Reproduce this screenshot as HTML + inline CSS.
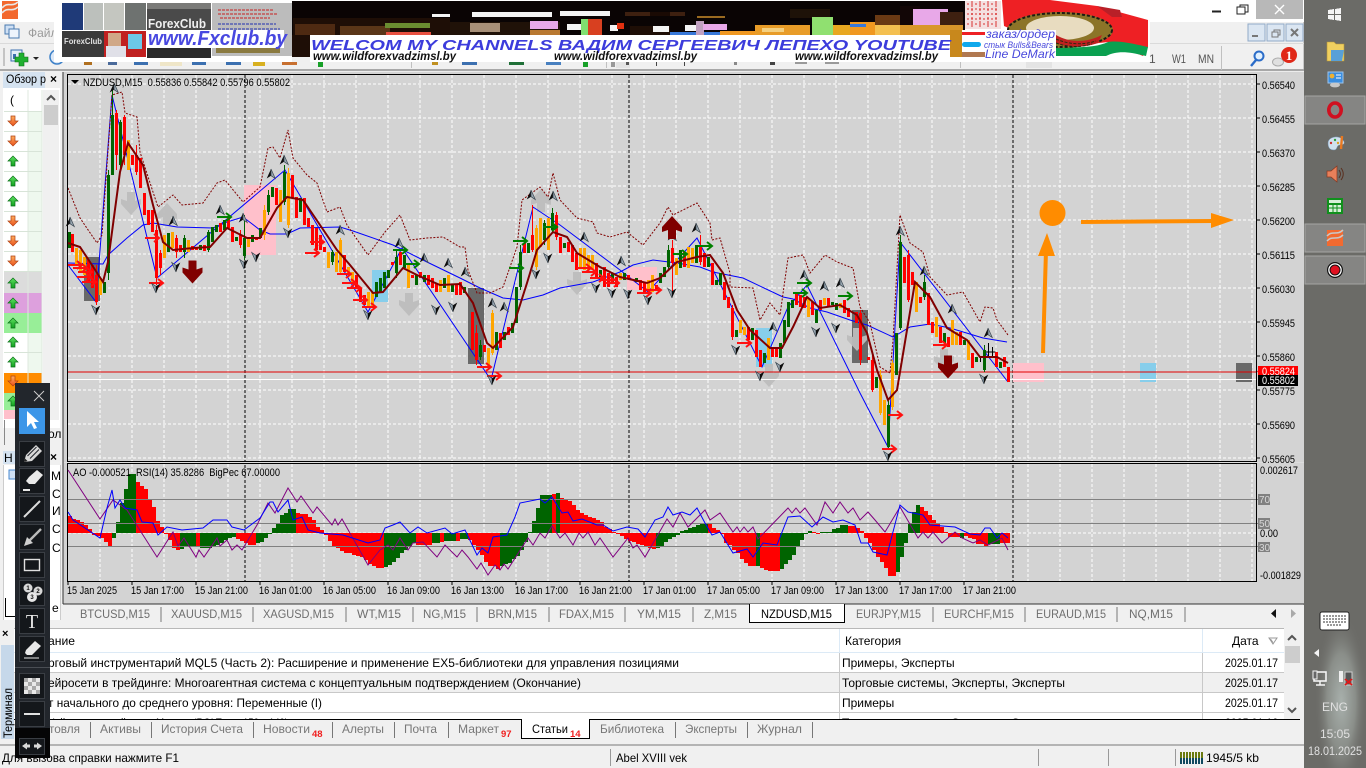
<!DOCTYPE html>
<html lang="ru"><head><meta charset="utf-8"><title>MT5 NZDUSD,M15</title>
<style>
html,body{margin:0;padding:0;width:1366px;height:768px;overflow:hidden;background:#6b6b67}
svg{display:block;font-family:"Liberation Sans","Noto Sans CJK SC",sans-serif}
text{white-space:pre}
.c{shape-rendering:crispEdges}
</style></head><body>
<svg width="1366" height="768" viewBox="0 0 1366 768" xmlns="http://www.w3.org/2000/svg">
<defs>
<radialGradient id="wp1" cx=".6" cy=".68" r=".42"><stop offset="0" stop-color="#a8b0ac"/><stop offset=".55" stop-color="#8a8e89"/><stop offset="1" stop-color="#6f6f6b" stop-opacity="0"/></radialGradient>
<linearGradient id="grD" x1="0" y1="0" x2="0" y2="1"><stop offset="0" stop-color="#ffb060"/><stop offset="1" stop-color="#e8501c"/></linearGradient>
<linearGradient id="grU" x1="0" y1="0" x2="0" y2="1"><stop offset="0" stop-color="#60e060"/><stop offset="1" stop-color="#10a020"/></linearGradient>
<g id="u"><path d="M0-5L-4.300 4.500 0 1.700Z" fill="#0c0c0c"/><path d="M0-5L4.300 4.500 0 1.700Z" fill="#98a6b0" stroke="#3a4650" stroke-width=".7"/></g>
<g id="d"><path d="M0 5L-4.300-4.500 0-1.700Z" fill="#98a6b0" stroke="#3a4650" stroke-width=".7"/><path d="M0 5L4.300-4.500 0-1.700Z" fill="#0c0c0c"/></g>
<path id="ra" d="M0 0H14M9-4L14 0 9 4" fill="none" stroke="#ff1010" stroke-width="2"/>
<path id="ga" d="M0 0H14M9-4L14 0 9 4" fill="none" stroke="#008000" stroke-width="2"/>
<path id="bd" d="M-4-11H4V-2L10-4V1L0 12-10 1V-4L-4-2Z"/>
<path id="bu" d="M-4 11H4V2L10 4V-1L0-12-10-1V4L-4 2Z"/>
<g id="au"><path d="M0-5L5 0H2V5H-2V0H-5Z" fill="url(#grU)" stroke="#0a7018" stroke-width=".7"/></g>
<g id="ad"><path d="M0 5L5 0H2V-5H-2V0H-5Z" fill="url(#grD)" stroke="#b04010" stroke-width=".7"/></g>
</defs>

<!-- wallpaper / taskbar -->
<rect x="1304" width="62" height="768" fill="#6b6b67"/>
<rect x="1304" y="560" width="62" height="208" fill="url(#wp1)"/>
<rect x="1305" y="96" width="60" height="28" fill="#858583" stroke="#a5a5a3"/>
<rect x="1305" y="224" width="60" height="28" fill="#858583" stroke="#a5a5a3"/>
<rect x="1305" y="256" width="60" height="28" fill="#858583" stroke="#a5a5a3"/>
<g class="c" fill="#f4f4f4"><path d="M1328 10l6-1v5h-6zM1335 9l6-1v6h-6zM1328 15h6v5l-6-1zM1335 15h6v6l-6-1z"/></g>
<path d="M1327 42h7l2 2h8v17h-17z" fill="#f0d060" stroke="#b89838" stroke-width=".6"/><path d="M1331 50h13l-2 11h-11z" fill="#58a0d8"/>
<rect x="1328" y="72" width="15" height="11" fill="#3a8ee0" stroke="#9cc4ec"/><circle cx="1332" cy="76" r="2.400" fill="#f0b030"/><path d="M1336 75h5M1336 78h5" stroke="#fff"/><ellipse cx="1335" cy="85" rx="5" ry="2.400" fill="#c8c8c8"/>
<ellipse cx="1335" cy="110" rx="6.200" ry="7" fill="none" stroke="#d01020" stroke-width="3.600"/>
<path d="M1328 143c0-6 10-8 14-4s2 6-2 6-2 5-6 5-6-2-6-7z" fill="#cfe0ee" stroke="#7090b0" stroke-width=".5"/><circle cx="1331" cy="143" r="1.200" fill="#d03030"/><circle cx="1335" cy="140" r="1.200" fill="#30a040"/><circle cx="1338" cy="143" r="1.200" fill="#e0a020"/><path d="M1342 136l-1 13" stroke="#e87820" stroke-width="2.400"/>
<path d="M1327 171h4l6-5v16l-6-5h-4z" fill="#e8805a" stroke="#883820" stroke-width=".7"/><path d="M1339 170c2 3 2 5 0 8M1341 168c3 4 3 8 0 12" fill="none" stroke="#5a3020"/>
<rect x="1327" y="198" width="16" height="16" fill="#10901c"/><rect x="1329" y="200" width="12" height="3" fill="#d8f0d8"/><path d="M1329 205h12v7h-12z" fill="#d8f0d8"/><path d="M1333 205v7M1337 205v7M1329 208h12" stroke="#10901c"/>
<rect x="1327" y="230" width="16" height="16" fill="#f26a30"/><path d="M1327 241c5-6 10 0 16-6M1327 236c5-6 10 0 16-6" fill="none" stroke="#c8c8c8" stroke-width="1.600"/>
<circle cx="1335" cy="270" r="8" fill="#111"/><circle cx="1335" cy="270" r="6.800" fill="#fff"/><circle cx="1335" cy="270" r="5" fill="#e01020"/><circle cx="1335" cy="270" r="5" fill="none" stroke="#111"/>
<rect x="1320" y="612" width="29" height="18" rx="2" fill="#fff" stroke="#222"/><path class="c" d="M1323 616h23M1323 619h23M1323 622h23M1327 625h15" stroke="#333" stroke-dasharray="2 1"/>
<path d="M1319 649v8l-5-4z" fill="#f4f4f4"/>
<rect x="1314" y="672" width="12" height="9" fill="none" stroke="#f4f4f4" stroke-width="1.600"/><path d="M1320 681v4M1316 685h9" stroke="#f4f4f4" stroke-width="1.500"/><rect x="1313" y="671" width="4" height="8" fill="#666" stroke="#f4f4f4"/>
<rect x="1339" y="671" width="4" height="11" fill="#eee"/><rect x="1345" y="672" width="7" height="13" fill="#555" stroke="#ccc"/><path d="M1345 679l7 6M1352 679l-7 6" stroke="#e01818" stroke-width="1.800"/>
<g fill="#e0e0e0" font-size="12" text-anchor="middle"><text x="1335" y="711">ENG</text><text x="1335" y="738">15:05</text><text x="1335" y="755" textLength="54" lengthAdjust="spacingAndGlyphs">18.01.2025</text></g>

<!-- app window -->
<rect width="1304" height="768" fill="#f0f0f0"/>
<rect x="1303" width="1" height="768" fill="#c8c8c8"/>
<rect width="1304" height="22" fill="#ffffff"/>
<rect x="1256" width="47" height="19" fill="#b8b8b8"/>
<path d="M1212 11.500h9" stroke="#222" stroke-width="2"/><rect x="1237" y="7" width="8" height="7" fill="none" stroke="#222"/><path d="M1240 7V5h8v7h-3" fill="none" stroke="#222"/>
<path d="M1275 5l9 9M1284 5l-9 9" stroke="#fff" stroke-width="1.400"/>
<rect x="2" y="1" width="16" height="18" fill="#f2682e"/><path d="M2 13c6-7 9 0 16-6M2 8c6-7 9 0 16-6" fill="none" stroke="#e8e8e8" stroke-width="1.600"/>
<rect y="43" width="1304" height="1" fill="#dadada"/>
<rect x="5" y="25" width="9" height="9" fill="#cfe0f4" stroke="#4a7ab0"/><rect x="9" y="29" width="10" height="9" fill="#eef4fc" stroke="#4a7ab0"/>
<text x="28" y="37" font-size="12" fill="#9a9a9a">Файл</text>
<g class="c"><rect x="1248" y="24" width="17" height="17" fill="#dbe6f2" stroke="#90aac8"/><rect x="1267" y="24" width="17" height="17" fill="#dbe6f2" stroke="#90aac8"/><rect x="1286" y="24" width="17" height="17" fill="#dbe6f2" stroke="#90aac8"/></g>
<path d="M1252 36h6" stroke="#777" stroke-width="2"/><rect x="1272" y="32" width="6" height="5" fill="none" stroke="#777"/><path d="M1274 32v-2h6v5h-2" fill="none" stroke="#777"/><path d="M1291 29l7 7M1298 29l-7 7" stroke="#777" stroke-width="2"/>

<!-- toolbar -->
<rect x="3" y="48" width="2" height="18" fill="#c4c4c4"/>
<rect x="11" y="50" width="11" height="11" fill="#e4eefa" stroke="#3c70b0"/><rect x="13" y="54" width="3" height="5" fill="#3c70b0"/>
<path d="M19 53h5v4h4v5h-4v4h-5v-4h-4v-5h4z" fill="#20b030" stroke="#0c7018" stroke-width=".6"/>
<path d="M33 57h6l-3 3z" fill="#222"/>
<circle cx="57" cy="57" r="7" fill="#dce8f6" stroke="#3c80c8" stroke-width="1.500"/>
<rect y="69" width="1304" height="2" fill="#a8a8a8"/>
<g class="c">
<rect x="84" y="62" width="8" height="3" fill="#b07020"/><rect x="108" y="62" width="9" height="3" fill="#4a6a9a"/><rect x="134" y="62" width="14" height="3" fill="#3c70b0"/><rect x="160" y="62" width="22" height="4" fill="#efe6c8"/><rect x="192" y="62" width="14" height="3" fill="#3c70b0"/><rect x="226" y="62" width="15" height="3" fill="#3c70b0"/><rect x="253" y="62" width="12" height="4" fill="#d8b020"/><rect x="282" y="62" width="15" height="3" fill="#c87030"/><rect x="318" y="62" width="5" height="5" fill="#18a028"/>
<rect x="411" y="48" width="1" height="20" fill="#c0c0c0"/><rect x="432" y="62" width="6" height="3" fill="#c09020"/><rect x="462" y="62" width="15" height="3" fill="#3c70b0"/><rect x="509" y="62" width="15" height="3" fill="#207038"/><rect x="546" y="62" width="15" height="3" fill="#4880c0"/><rect x="583" y="62" width="5" height="5" fill="#18a028"/>
<rect x="606" y="48" width="1" height="20" fill="#c0c0c0"/><rect x="611" y="62" width="4" height="5" fill="#999"/><rect x="616" y="62" width="14" height="6" fill="#e4e4e4"/><rect x="626" y="62" width="3" height="3" fill="#555"/><rect x="656" y="62" width="1" height="4" fill="#444"/><rect x="684" y="62" width="1" height="4" fill="#444"/><rect x="734" y="62" width="3" height="3" fill="#888"/><rect x="770" y="62" width="5" height="3" fill="#444"/><rect x="795" y="62" width="12" height="2" fill="#999"/><rect x="825" y="62" width="14" height="2" fill="#999"/>
<rect x="960" y="62" width="1" height="6" fill="#c0c0c0"/><rect x="1026" y="62" width="26" height="6" fill="#e4e4e4"/><rect x="1221" y="46" width="1" height="24" fill="#c0c0c0"/>
</g>
<g font-size="12" fill="#555"><text x="1149" y="63">1</text><text x="1172" y="63" textLength="14" lengthAdjust="spacingAndGlyphs">W1</text><text x="1198" y="63" textLength="16" lengthAdjust="spacingAndGlyphs">MN</text></g>
<circle cx="1259" cy="56" r="4.500" fill="#e0f0ff" stroke="#2a6cc8" stroke-width="2"/><path d="M1256 60l-5 6" stroke="#2a6cc8" stroke-width="2.400"/>
<ellipse cx="1278" cy="62" rx="5.500" ry="4" fill="#e0e0e0" stroke="#aaa"/>
<circle cx="1289" cy="55" r="8" fill="#e02818"/><text x="1289" y="60" font-size="13" font-weight="bold" fill="#fff" text-anchor="middle" font-family="Liberation Serif,serif">1</text>

<!-- chart frame -->
<rect x="60" y="71" width="1244" height="533" fill="#ececec"/>
<rect x="63" y="72" width="1241" height="532" fill="#d3d3d3"/>
<path class="c" d="M63 72V604M63 604H1304" stroke="#333"/>
<g fill="none" class="c">
<path d="M68 84H1256M68 118H1256M68 152H1256M68 186H1256M68 220H1256M68 254H1256M68 288H1256M68 322H1256M68 356H1256M68 390H1256M68 424H1256M68 458H1256" stroke="#fff" stroke-dasharray="3 2"/>
<path d="M100 75V461M132 75V461M164 75V461M196 75V461M228 75V461M260 75V461M292 75V461M324 75V461M356 75V461M388 75V461M420 75V461M452 75V461M484 75V461M516 75V461M548 75V461M580 75V461M612 75V461M644 75V461M676 75V461M708 75V461M740 75V461M772 75V461M804 75V461M836 75V461M868 75V461M900 75V461M932 75V461M964 75V461M996 75V461M1028 75V461M1060 75V461M1092 75V461M1124 75V461M1156 75V461M1188 75V461M1220 75V461M1252 75V461" stroke="#fff" stroke-dasharray="3 2"/>
<path d="M100 464V581M132 464V581M164 464V581M196 464V581M228 464V581M260 464V581M292 464V581M324 464V581M356 464V581M388 464V581M420 464V581M452 464V581M484 464V581M516 464V581M548 464V581M580 464V581M612 464V581M644 464V581M676 464V581M708 464V581M740 464V581M772 464V581M804 464V581M836 464V581M868 464V581M900 464V581M932 464V581M964 464V581M996 464V581M1028 464V581M1060 464V581M1092 464V581M1124 464V581M1156 464V581M1188 464V581M1220 464V581M1252 464V581" stroke="#fff" stroke-dasharray="3 2"/>
<path d="M68 533H1256" stroke="#fff" stroke-dasharray="3 2"/>
<path d="M245 75V581M629 75V581M1013 75V581" stroke="#000" stroke-dasharray="3 2"/>
</g>
<!-- coloured zones -->
<g class="c">
<rect x="244" y="185" width="32" height="70" fill="#ffc0cb"/><rect x="627" y="267" width="30" height="23" fill="#ffc0cb"/><rect x="1013" y="363" width="31" height="19" fill="#ffc0cb"/>
<rect x="84" y="257" width="16" height="44" fill="#696969"/><rect x="468" y="288" width="16" height="76" fill="#696969"/><rect x="852" y="310" width="16" height="53" fill="#696969"/><rect x="1236" y="363" width="16" height="19" fill="#696969"/>
<rect x="372" y="270" width="16" height="32" fill="#87ceeb"/><rect x="756" y="328" width="16" height="39" fill="#87ceeb"/><rect x="1140" y="363" width="16" height="19" fill="#87ceeb"/>
</g>
<!-- gray big arrows -->
<g fill="#bdbdbd" opacity=".95">
<use href="#bu" x="167" y="215"/><use href="#bd" x="131" y="203"/><use href="#bd" x="409" y="304"/><use href="#bu" x="541" y="201"/><use href="#bd" x="577" y="283"/><use href="#bd" x="769" y="375"/><use href="#bd" x="857" y="339"/><use href="#bd" x="944" y="360"/>
</g>
<!-- levels -->
<path class="c" d="M68 372H1256" stroke="#e00000"/>
<path class="c" d="M68 379.500H1256" stroke="#fff"/>
<!-- MA slow blue -->
<path fill="none" stroke="#0000ff" d="M68 263L103 264 108 255 127 238 143 225 153 223 177 227 213 228 227 222 243 217 260 230 270 234 287 234 300 228 340 227 353 231 393 245 427 262 460 278 480 288 503 298 523 300 543 295 560 288 593 282 620 272 633 265 653 260 677 263 700 267 713 272 743 278 783 297 793 299 810 308 827 312 850 320 867 325 893 337 910 327 930 324 950 328 983 338 1007 342"/>
<!-- zigzag -->
<path fill="none" stroke="#0000ff" d="M68 265L96 302 112 95 157 278 285 170 368 312 402 248 491 380 533 207 560 225 620 270 648 292 697 238 762 367 788 307 807 285 860 393 888 447 900 242 1008 382"/>
<!-- upper dashed -->
<path fill="none" stroke="#800000" stroke-dasharray="2 1.500" d="M68 188L80 218 97 243 102 235 112 95 122 92 125 113 137 117 140 152 153 192 158 207 173 195 182 205 203 203 217 183 225 180 243 202 260 187 268 148 273 147 280 158 288 130 293 158 307 175 317 183 327 212 340 207 347 225 368 255 385 232 400 215 410 240 427 238 443 237 460 247 465 247 468 270 477 293 490 293 503 287 517 247 522 200 540 187 548 197 553 173 560 200 577 218 593 222 597 233 610 237 627 232 643 245 660 223 668 207 673 215 697 203 710 223 712 240 720 238 730 273 730 287 753 288 760 320 770 303 780 315 788 258 803 255 810 273 825 255 837 262 850 267 853 268 860 307 870 323 880 367 890 373 893 340 900 215 910 243 923 252 930 277 947 295 963 292 980 322 985 307 993 308 997 320 1008 335"/>

<!-- candles: wicks -->
<g transform="translate(.5)" fill="none" class="c">
<path stroke="#006400" d="M108 170V280M112 90V175M120 120V170M184 235V258M244 215V260M268 190V215M284 165V205M332 250V265M396 250V278M520 245V290M544 220V245M552 208V232M668 245V270M900 235V330M888 400V450M984 345V372M208 230V252M480 340V360M924 275V300"/>
<path stroke="#ff0000" d="M96 265V305M116 110V170M124 115V165M136 145V175M156 225V285M160 250V275M176 235V258M240 230V248M476 325V365M532 205V252M556 212V240M672 240V293M700 235V265M860 310V365M872 355V392M908 250V302M732 305V340"/>
<path stroke="#ffa500" d="M264 205V240M288 168V228M340 238V275M492 310V355M536 225V270M880 370V415M892 360V410"/>
<path stroke="#000" d="M988 343V357M985 352H991M992 347V357M989 352H995M980 357V362"/>
</g>
<!-- candles: bodies -->
<g transform="translate(.5)" fill="none" stroke-width="3" class="c">
<path stroke="#006400" d="M69 232V248M104 282V293M108 175V273M112 115V175M120 122V165M168 233V252M184 238V252M200 245V250M208 232V250M212 227V242M216 225V232M224 220V230M236 237V241M244 238V256M252 235V242M260 228V238M268 195V212M272 187V197M284 172V202M300 198V212M332 252V262M376 282V297M380 278V292M384 272V288M388 270V278M396 257V273M404 255V268M416 275V285M424 275V282M444 278V288M452 285V292M464 287V293M480 345V357M496 332V350M504 332V340M512 323V333M516 287V323M520 252V287M528 243V253M544 223V240M552 213V230M564 243V248M600 270V277M612 273V282M624 273V280M636 278V282M660 273V283M664 267V277M668 250V267M680 250V268M696 245V263M708 257V267M716 280V285M720 273V285M736 330V337M752 328V340M764 353V363M780 343V358M784 320V343M788 302V327M792 300V308M816 310V323M832 302V305M836 303V310M876 377V388M888 405V447M896 333V375M900 242V328M924 282V297M944 333V343M964 340V345M976 357V362M984 350V370M1000 362V368"/>
<path stroke="#ff0000" d="M72 234V252M88 260V282M92 265V288M96 275V302M116 113V155M124 117V155M132 155V165M136 155V172M140 158V188M144 193V215M148 210V225M152 210V232M156 230V278M160 253V268M176 238V252M180 245V252M192 246V250M196 247V250M204 245V251M220 223V232M228 218V228M232 227V242M240 235V245M256 238V240M276 188V205M292 175V198M296 197V218M304 198V225M308 218V227M312 225V245M316 228V250M320 235V250M324 247V252M344 255V272M356 275V288M360 288V302M364 295V305M392 262V265M400 252V265M412 275V278M420 272V278M428 275V285M432 278V288M436 283V292M456 285V295M460 282V295M472 312V350M476 333V360M484 345V352M500 333V348M508 327V335M524 243V253M532 235V250M556 215V237M560 237V253M568 242V252M572 245V262M576 253V270M596 263V278M604 267V287M608 273V287M616 277V287M628 275V278M640 280V290M644 282V292M656 285V290M672 248V263M684 252V267M700 245V262M704 253V267M712 263V285M724 282V300M728 297V308M732 308V337M748 327V340M756 330V357M760 350V367M772 348V357M776 347V357M796 293V305M800 295V307M804 297V308M812 302V315M820 300V310M828 298V307M844 300V313M848 308V317M856 312V323M860 313V360M868 357V360M872 360V390M904 257V283M908 255V300M912 272V285M920 297V303M928 293V325M932 322V333M940 327V343M948 337V347M960 332V345M972 353V368M996 352V367M1004 357V367M1008 367V382"/>
<path stroke="#ffa500" d="M76 248V265M80 250V272M84 257V275M100 278V295M128 140V170M164 235V258M172 232V248M188 240V252M248 238V247M264 210V235M280 190V222M288 173V225M328 252V268M336 252V272M340 240V272M348 267V275M352 272V282M368 292V307M372 292V308M408 265V288M440 280V292M448 275V292M488 348V367M492 313V353M536 228V267M540 218V247M548 218V250M580 248V267M584 248V270M588 255V270M592 255V270M620 273V280M648 280V290M652 275V292M676 258V275M688 247V268M692 248V263M740 320V333M744 327V335M768 338V360M808 298V317M824 298V305M840 303V308M880 375V413M884 400V425M892 363V407M916 282V312M936 317V337M952 320V345M956 332V345M968 340V360"/>
</g>
<!-- fast MA -->
<path fill="none" stroke="#800000" stroke-width="2" d="M68 243L80 247 90 262 103 282 108 262 120 172 128 143 143 165 153 205 163 242 173 250 193 248 210 247 227 228 247 238 260 238 277 208 287 197 303 200 320 225 337 250 350 265 373 293 383 292 403 268 417 275 440 285 460 284 473 303 487 343 493 348 513 327 527 283 537 250 553 232 567 237 577 253 600 267 620 277 647 283 660 278 677 262 697 257 710 255 723 273 737 310 750 330 770 348 782 348 793 327 807 297 820 308 840 305 857 315 867 333 877 370 888 400 897 390 907 330 915 282 930 297 947 328 967 340 980 357 997 357 1008 363"/>
<!-- small arrows -->
<use href="#ra" x="68" y="265"/><use href="#ra" x="73" y="268"/><use href="#ra" x="78" y="272"/><use href="#ra" x="77" y="277"/><use href="#ra" x="82" y="282"/><use href="#ra" x="145" y="238"/><use href="#ra" x="149" y="283"/><use href="#ra" x="310" y="242"/><use href="#ra" x="305" y="253"/><use href="#ra" x="337" y="274"/><use href="#ra" x="342" y="283"/><use href="#ra" x="347" y="288"/><use href="#ra" x="353" y="300"/><use href="#ra" x="362" y="307"/>
<use href="#ra" x="477" y="367"/><use href="#ra" x="487" y="376"/><use href="#ra" x="577" y="268"/><use href="#ra" x="582" y="272"/><use href="#ra" x="590" y="278"/><use href="#ra" x="600" y="280"/><use href="#ra" x="605" y="283"/><use href="#ra" x="637" y="293"/><use href="#ra" x="647" y="290"/><use href="#ra" x="737" y="343"/><use href="#ra" x="882" y="449"/><use href="#ra" x="933" y="345"/><use href="#ra" x="888" y="415"/>
<use href="#ga" x="217" y="217"/><use href="#ga" x="393" y="250"/><use href="#ga" x="405" y="264"/><use href="#ga" x="513" y="241"/><use href="#ga" x="509" y="268"/><use href="#ga" x="543" y="227"/><use href="#ga" x="673" y="254"/><use href="#ga" x="698" y="246"/><use href="#ga" x="797" y="283"/><use href="#ga" x="793" y="293"/><use href="#ga" x="838" y="296"/>
<!-- markers -->
<use href="#u" x="114" y="88"/><use href="#u" x="220" y="210"/><use href="#u" x="243" y="218"/><use href="#u" x="271" y="174"/><use href="#u" x="284" y="160"/><use href="#u" x="70" y="222"/><use href="#u" x="173" y="221"/><use href="#u" x="340" y="230"/><use href="#u" x="399" y="243"/><use href="#u" x="424" y="258"/><use href="#u" x="448" y="263"/><use href="#u" x="465" y="272"/><use href="#u" x="492" y="303"/><use href="#u" x="504" y="307"/><use href="#u" x="531" y="195"/><use href="#u" x="553" y="196"/><use href="#u" x="584" y="237"/><use href="#u" x="621" y="261"/><use href="#u" x="672" y="236"/><use href="#u" x="696" y="228"/><use href="#u" x="804" y="275"/><use href="#u" x="824" y="286"/><use href="#u" x="840" y="283"/><use href="#u" x="773" y="327"/><use href="#u" x="900" y="231"/><use href="#u" x="924" y="271"/><use href="#u" x="952" y="309"/><use href="#u" x="988" y="333"/>
<use href="#d" x="96" y="310"/><use href="#d" x="156" y="288"/><use href="#d" x="176" y="267"/><use href="#d" x="244" y="264"/><use href="#d" x="256" y="257"/><use href="#d" x="288" y="233"/><use href="#d" x="368" y="315"/><use href="#d" x="436" y="310"/><use href="#d" x="453" y="307"/><use href="#d" x="492" y="380"/><use href="#d" x="536" y="274"/><use href="#d" x="548" y="258"/><use href="#d" x="596" y="288"/><use href="#d" x="612" y="293"/><use href="#d" x="628" y="294"/><use href="#d" x="648" y="300"/><use href="#d" x="672" y="293"/><use href="#d" x="736" y="350"/><use href="#d" x="760" y="376"/><use href="#d" x="780" y="367"/><use href="#d" x="816" y="332"/><use href="#d" x="836" y="328"/><use href="#d" x="888" y="456"/><use href="#d" x="984" y="379"/>
<!-- dark red big arrows -->
<g fill="#800000"><use href="#bd" x="192.500" y="271.500"/><use href="#bd" x="948" y="366.500"/><use href="#bu" x="672" y="228"/></g>
<!-- orange annotations -->
<circle cx="1052.500" cy="213" r="13" fill="#ff8c00"/>
<path d="M1043 353L1046 250" stroke="#ff8c00" stroke-width="4" fill="none"/><path d="M1047 233L1055 256H1038Z" fill="#ff8c00"/>
<path d="M1081 222L1214 221" stroke="#ff8c00" stroke-width="4" fill="none"/><path d="M1234 220L1211 213V228Z" fill="#ff8c00"/>

<!-- frames -->
<path class="c" d="M67.500 74.500H1256.500V461.500H67.500Z" fill="none" stroke="#000"/>
<rect class="c" x="64" y="462" width="1240" height="1" fill="#ddd"/>
<path class="c" d="M67.500 463.500H1256.500V581.500H67.500Z" fill="none" stroke="#000"/>
<!-- price axis -->
<path class="c" d="M1257 84h3M1257 118h3M1257 152h3M1257 186h3M1257 220h3M1257 254h3M1257 288h3M1257 322h3M1257 356h3M1257 390h3M1257 424h3M1257 458h3" stroke="#000"/>
<g font-size="11" fill="#000">
<text x="1262" y="89" textLength="33" lengthAdjust="spacingAndGlyphs">0.56540</text><text x="1262" y="123" textLength="33" lengthAdjust="spacingAndGlyphs">0.56455</text><text x="1262" y="157" textLength="33" lengthAdjust="spacingAndGlyphs">0.56370</text><text x="1262" y="191" textLength="33" lengthAdjust="spacingAndGlyphs">0.56285</text><text x="1262" y="225" textLength="33" lengthAdjust="spacingAndGlyphs">0.56200</text><text x="1262" y="259" textLength="33" lengthAdjust="spacingAndGlyphs">0.56115</text><text x="1262" y="293" textLength="33" lengthAdjust="spacingAndGlyphs">0.56030</text><text x="1262" y="327" textLength="33" lengthAdjust="spacingAndGlyphs">0.55945</text><text x="1262" y="361" textLength="33" lengthAdjust="spacingAndGlyphs">0.55860</text><text x="1262" y="395" textLength="33" lengthAdjust="spacingAndGlyphs">0.55775</text><text x="1262" y="429" textLength="33" lengthAdjust="spacingAndGlyphs">0.55690</text><text x="1262" y="463" textLength="33" lengthAdjust="spacingAndGlyphs">0.55605</text>
</g>
<rect class="c" x="1258" y="366" width="40" height="11" fill="#ff0000"/><rect class="c" x="1258" y="375" width="40" height="11" fill="#000"/>
<path d="M1257 371.500l3-3v6z" fill="#ff0000"/>
<text x="1262" y="375" font-size="11" fill="#fff" textLength="33" lengthAdjust="spacingAndGlyphs">0.55824</text>
<text x="1262" y="384" font-size="11" fill="#fff" textLength="33" lengthAdjust="spacingAndGlyphs">0.55802</text>
<!-- legends -->
<path d="M71 80h8l-4 4z" fill="#000"/>
<text x="83" y="86" font-size="11" fill="#000" textLength="207" lengthAdjust="spacingAndGlyphs">NZDUSD,M15  0.55836 0.55842 0.55796 0.55802</text>

<!-- indicator histogram -->
<path class="c" fill="none" stroke="#006400" stroke-width="4" d="M114 538V533M118 522V533M122 503V533M126 489V533M130 474V533M134 474V533M182 549V533M186 547V533M190 547V533M194 547V533M202 548V533M206 548V533M210 548V533M214 546V533M218 545V533M222 543V533M226 540V533M230 538V533M234 537V533M258 543V533M262 542V533M266 538V533M270 534V533M274 528V533M278 523V533M282 515V533M286 513V533M290 509V533M294 509V533M386 567V533M390 565V533M394 562V533M398 558V533M402 553V533M406 550V533M410 547V533M414 543V533M434 543V533M438 543V533M446 541V533M450 541V533M454 541V533M462 539V533M466 539V533M502 566V533M506 564V533M510 563V533M514 559V533M518 556V533M522 550V533M526 542V533M530 532V533M534 521V533M538 508V533M542 495V533M546 495V533M550 495V533M558 493V533M658 548V533M662 546V533M666 542V533M670 539V533M674 537V533M678 535V533M682 531V533M686 530V533M690 528V533M694 527V533M698 525V533M702 523V533M706 523V533M758 566V533M782 569V533M786 564V533M790 560V533M794 555V533M798 547V533M802 540V533M806 534V533M810 531V533M822 532V533M826 532V533M830 532V533M834 529V533M838 528V533M842 525V533M846 525V533M898 572V533M902 557V533M906 543V533M910 523V533M914 512V533M918 505V533M962 538V533M990 544V533M994 544V533M998 544V533"/>
<path class="c" fill="none" stroke="#ff0000" stroke-width="4" d="M70 516V533M74 519V533M78 520V533M82 522V533M86 525V533M90 529V533M94 535V533M98 536V533M102 538V533M106 542V533M110 546V533M138 482V533M142 486V533M146 489V533M150 500V533M154 507V533M158 521V533M162 527V533M166 534V533M170 540V533M174 548V533M178 550V533M198 547V533M238 539V533M242 541V533M246 543V533M250 545V533M254 545V533M298 513V533M302 514V533M306 514V533M310 517V533M314 520V533M318 527V533M322 530V533M326 535V533M330 541V533M334 546V533M338 548V533M342 551V533M346 553V533M350 553V533M354 555V533M358 556V533M362 557V533M366 560V533M370 564V533M374 566V533M378 568V533M382 568V533M418 545V533M422 545V533M426 545V533M430 545V533M442 542V533M458 541V533M470 540V533M474 545V533M478 550V533M482 555V533M486 562V533M490 566V533M494 566V533M498 569V533M554 494V533M562 498V533M566 499V533M570 501V533M574 505V533M578 510V533M582 513V533M586 515V533M590 517V533M594 518V533M598 520V533M602 522V533M606 527V533M610 529V533M614 532V533M618 534V533M622 536V533M626 539V533M630 541V533M634 542V533M638 544V533M642 545V533M646 547V533M650 548V533M654 549V533M710 523V533M714 528V533M718 530V533M722 534V533M726 543V533M730 545V533M734 550V533M738 553V533M742 559V533M746 563V533M750 566V533M754 566V533M762 568V533M766 570V533M770 571V533M774 571V533M778 571V533M814 532V533M818 534V533M850 526V533M854 526V533M858 528V533M862 531V533M866 538V533M870 543V533M874 550V533M878 557V533M882 562V533M886 568V533M890 576V533M894 576V533M922 507V533M926 511V533M930 515V533M934 520V533M938 523V533M942 527V533M946 532V533M950 537V533M954 537V533M958 537V533M966 536V533M970 538V533M974 539V533M978 544V533M982 544V533M986 546V533M1002 543V533M1006 543V533M1008 543V533"/>
<path class="c" d="M68 499.500H1256M68 523.500H1256M68 546.500H1256" stroke="#808080"/>
<path fill="none" stroke="#800080" d="M68 470L100 519 113 500 127 510 157 557 173 532 178 546 184 538 196 557 199 550 204 557 217 538 220 546 227 540 232 550 237 545 242 550 257 525 268 503 275 513 288 488 297 502 301 496 313 513 317 507 332 525 335 519 338 525 342 519 368 565 380 550 388 545 393 550 400 538 408 550 413 543 423 542 437 557 445 545 457 557 462 550 468 557 477 569 481 563 488 575 495 565 500 570 504 564 508 569 528 538 533 545 540 533 545 538 552 526 560 538 565 533 573 545 579 533 583 538 588 532 595 545 600 538 613 557 628 538 633 548 637 545 645 557 667 519 673 527 680 513 688 527 705 510 710 520 720 513 733 532 737 527 740 532 744 527 748 532 753 527 758 539 788 508 792 513 796 508 800 513 805 508 817 525 825 502 833 513 840 502 848 513 853 508 860 520 868 512 875 520 885 532 900 507 918 538 923 532 928 538 933 532 942 543 955 532 962 538 973 543 980 540 988 545 1002 538 1008 550"/>
<path fill="none" stroke="#0000ff" d="M68 512L73 520 100 538 107 508 112 490 115 508 120 500 125 508 137 510 142 522 153 523 158 535 167 527 182 530 203 528 213 520 227 520 232 527 244 530 260 518 270 502 273 502 278 512 288 500 293 520 302 517 308 530 320 533 343 535 368 543 380 540 385 528 393 525 400 522 410 533 418 527 427 533 445 528 452 534 465 530 477 555 482 548 488 553 493 537 507 535 515 517 520 503 540 499 545 503 552 497 562 513 568 512 573 521 582 519 597 525 603 525 613 531 627 527 638 529 645 537 655 520 663 517 668 507 673 515 682 512 690 515 697 508 705 523 712 535 720 532 733 553 747 549 753 557 763 543 777 545 788 517 800 516 812 527 823 517 833 522 843 520 855 525 861 543 868 543 873 552 887 555 900 505 908 512 923 515 930 525 955 527 970 534 980 535 985 528 990 528 997 538 1002 533 1008 538"/>
<text x="73" y="476" font-size="11" fill="#000" textLength="207" lengthAdjust="spacingAndGlyphs">AO -0.000521  RSI(14) 35.8286  BigPec 67.00000</text>
<!-- sub axis -->
<g font-size="11" fill="#000"><text x="1260" y="474" textLength="38" lengthAdjust="spacingAndGlyphs">0.002617</text><text x="1260" y="537" textLength="18" lengthAdjust="spacingAndGlyphs">0.00</text><text x="1260" y="579" textLength="41" lengthAdjust="spacingAndGlyphs">-0.001829</text></g>
<g class="c" fill="#808080"><rect x="1258" y="494" width="12" height="11"/><rect x="1258" y="518" width="12" height="11"/><rect x="1258" y="542" width="12" height="10"/></g>
<g font-size="10" fill="#d8d8d8"><text x="1259" y="503">70</text><text x="1259" y="527">50</text><text x="1259" y="551">30</text></g>
<path class="c" d="M1257 499.500h2M1257 523.500h2M1257 546.500h2" stroke="#808080"/>
<!-- time axis -->
<path class="c" d="M68 582v3M132 582v3M196 582v3M260 582v3M324 582v3M388 582v3M452 582v3M516 582v3M580 582v3M644 582v3M708 582v3M772 582v3M836 582v3M900 582v3M964 582v3" stroke="#000"/>
<g font-size="11" fill="#000">
<text x="67" y="594" textLength="50" lengthAdjust="spacingAndGlyphs">15 Jan 2025</text><text x="131" y="594" textLength="53" lengthAdjust="spacingAndGlyphs">15 Jan 17:00</text><text x="195" y="594" textLength="53" lengthAdjust="spacingAndGlyphs">15 Jan 21:00</text><text x="259" y="594" textLength="53" lengthAdjust="spacingAndGlyphs">16 Jan 01:00</text><text x="323" y="594" textLength="53" lengthAdjust="spacingAndGlyphs">16 Jan 05:00</text><text x="387" y="594" textLength="53" lengthAdjust="spacingAndGlyphs">16 Jan 09:00</text><text x="451" y="594" textLength="53" lengthAdjust="spacingAndGlyphs">16 Jan 13:00</text><text x="515" y="594" textLength="53" lengthAdjust="spacingAndGlyphs">16 Jan 17:00</text><text x="579" y="594" textLength="53" lengthAdjust="spacingAndGlyphs">16 Jan 21:00</text><text x="643" y="594" textLength="53" lengthAdjust="spacingAndGlyphs">17 Jan 01:00</text><text x="707" y="594" textLength="53" lengthAdjust="spacingAndGlyphs">17 Jan 05:00</text><text x="771" y="594" textLength="53" lengthAdjust="spacingAndGlyphs">17 Jan 09:00</text><text x="835" y="594" textLength="53" lengthAdjust="spacingAndGlyphs">17 Jan 13:00</text><text x="899" y="594" textLength="53" lengthAdjust="spacingAndGlyphs">17 Jan 17:00</text><text x="963" y="594" textLength="53" lengthAdjust="spacingAndGlyphs">17 Jan 21:00</text>
</g>

<!-- chart tabs -->
<rect x="60" y="605" width="1244" height="19" fill="#f0f0f0"/>
<path class="c" d="M161 607v15M253 607v15M346 607v15M413 607v15M477 607v15M549 607v15M625 607v15M693 607v15M933 607v15M1025 607v15M1117 607v15M1185 607v15" stroke="#777"/>
<g font-size="12" fill="#6e6e6e">
<text x="80" y="618" textLength="70" lengthAdjust="spacingAndGlyphs">BTCUSD,M15</text><text x="171" y="618" textLength="71" lengthAdjust="spacingAndGlyphs">XAUUSD,M15</text><text x="263" y="618" textLength="71" lengthAdjust="spacingAndGlyphs">XAGUSD,M15</text><text x="357" y="618" textLength="44" lengthAdjust="spacingAndGlyphs">WT,M15</text><text x="423" y="618" textLength="43" lengthAdjust="spacingAndGlyphs">NG,M15</text><text x="488" y="618" textLength="49" lengthAdjust="spacingAndGlyphs">BRN,M15</text><text x="559" y="618" textLength="55" lengthAdjust="spacingAndGlyphs">FDAX,M15</text><text x="637" y="618" textLength="44" lengthAdjust="spacingAndGlyphs">YM,M15</text><text x="704" y="618" textLength="33" lengthAdjust="spacingAndGlyphs">Z,M15</text><text x="856" y="618" textLength="65" lengthAdjust="spacingAndGlyphs">EURJPY,M15</text><text x="944" y="618" textLength="70" lengthAdjust="spacingAndGlyphs">EURCHF,M15</text><text x="1036" y="618" textLength="70" lengthAdjust="spacingAndGlyphs">EURAUD,M15</text><text x="1129" y="618" textLength="44" lengthAdjust="spacingAndGlyphs">NQ,M15</text>
</g>
<path class="c" d="M749.500 604V622.500H844.500V604" fill="#fff" stroke="#000"/>
<text x="761" y="618" font-size="12" fill="#000" textLength="71" lengthAdjust="spacingAndGlyphs">NZDUSD,M15</text>
<path d="M1276 609v9l-5-4.500z" fill="#111"/><path d="M1291 609v9l5-4.500z" fill="#aaa"/>

<!-- terminal table -->
<rect x="0" y="624" width="1304" height="121" fill="#f0f0f0"/>
<rect x="14" y="628" width="1270" height="91" fill="#fff"/>
<rect class="c" x="14" y="628" width="1270" height="1" fill="#b8b8b8"/>
<rect class="c" x="14" y="652" width="1270" height="1" fill="#dceaf6"/>
<rect class="c" x="14" y="673" width="1270" height="19" fill="#f0f0f0"/>
<path class="c" d="M14 672.500H1284M14 692.500H1284M14 712.500H1284M839.500 653V719M1202.500 653V719" stroke="#c8c8c8"/>
<path class="c" d="M839.500 629V652M1202.500 629V652" stroke="#dceaf6"/>
<g font-size="12" fill="#000">
<text x="48" y="645" textLength="27" lengthAdjust="spacingAndGlyphs">ание</text><text x="845" y="645">Категория</text><text x="1232" y="645">Дата</text>
<text x="48" y="667" textLength="631" lengthAdjust="spacingAndGlyphs">рговый инструментарий MQL5 (Часть 2): Расширение и применение EX5-библиотеки для управления позициями</text>
<text x="48" y="687" textLength="533" lengthAdjust="spacingAndGlyphs">ейросети в трейдинге: Многоагентная система с концептуальным подтверждением (Окончание)</text>
<text x="48" y="707" textLength="274" lengthAdjust="spacingAndGlyphs">т начального до среднего уровня: Переменные (I)</text>
<text x="48" y="727" textLength="240" lengthAdjust="spacingAndGlyphs">Нейросети в трейдинге: Модели (ROI Tuner 150 x 140)</text>
<text x="842" y="667">Примеры, Эксперты</text><text x="842" y="687" textLength="223" lengthAdjust="spacingAndGlyphs">Торговые системы, Эксперты, Эксперты</text><text x="842" y="707">Примеры</text><text x="842" y="727" textLength="223" lengthAdjust="spacingAndGlyphs">Торговые системы, Эксперты, Эксперты</text>
<text x="1225" y="667" textLength="53" lengthAdjust="spacingAndGlyphs">2025.01.17</text><text x="1225" y="687" textLength="53" lengthAdjust="spacingAndGlyphs">2025.01.17</text><text x="1225" y="707" textLength="53" lengthAdjust="spacingAndGlyphs">2025.01.17</text><text x="1225" y="727" textLength="53" lengthAdjust="spacingAndGlyphs">2025.01.16</text>
</g>
<path d="M1269 638h8l-4 6zM1270.500 639l2.500 3.500" fill="none" stroke="#999"/>
<rect class="c" x="1284" y="628" width="16" height="91" fill="#f0f0f0"/>
<path d="M1288 640l4-4 4 4" fill="none" stroke="#555" stroke-width="2"/><path d="M1288 708l4 4 4-4" fill="none" stroke="#555" stroke-width="2"/><rect class="c" x="1285" y="646" width="15" height="17" fill="#cdcdcd"/>
<!-- terminal tabs -->
<rect x="0" y="719" width="1304" height="26" fill="#f0f0f0"/>
<path class="c" d="M14 719.500H1300" stroke="#000"/>
<path class="c" d="M90.500 722v16M151.500 722v16M253.500 722v16M332.500 722v16M394.500 722v16M448.500 722v16M675.500 722v16M747.500 722v16M812.500 722v16" stroke="#777"/>
<path class="c" d="M521.500 719.500V738.500H589.500V719.500" fill="#fff" stroke="#000"/>
<rect x="522" y="719" width="67" height="2" fill="#fff"/>
<g font-size="12" fill="#777"><text x="49" y="733" textLength="31" lengthAdjust="spacingAndGlyphs">товля</text><text x="100" y="733" textLength="41" lengthAdjust="spacingAndGlyphs">Активы</text><text x="161" y="733" textLength="82" lengthAdjust="spacingAndGlyphs">История Счета</text><text x="263" y="733" textLength="47" lengthAdjust="spacingAndGlyphs">Новости</text><text x="342" y="733" textLength="42" lengthAdjust="spacingAndGlyphs">Алерты</text><text x="404" y="733" textLength="33" lengthAdjust="spacingAndGlyphs">Почта</text><text x="458" y="733" textLength="41" lengthAdjust="spacingAndGlyphs">Маркет</text><text x="600" y="733" textLength="64" lengthAdjust="spacingAndGlyphs">Библиотека</text><text x="685" y="733" textLength="52" lengthAdjust="spacingAndGlyphs">Эксперты</text><text x="757" y="733" textLength="45" lengthAdjust="spacingAndGlyphs">Журнал</text></g>
<text x="532" y="733" font-size="12" fill="#000" textLength="36" lengthAdjust="spacingAndGlyphs">Статьи</text>
<g font-size="9.500" font-weight="bold" fill="#f02020"><text x="312" y="737">48</text><text x="501" y="737">97</text><text x="570" y="737">14</text></g>
<!-- terminal side -->
<rect x="0" y="624" width="14" height="121" fill="#f0f0f0"/>
<text x="2" y="637" font-size="11" font-weight="bold">×</text>
<rect class="c" x="1" y="645" width="13" height="94" fill="#c6d8ea"/>
<text transform="translate(12 738) rotate(-90)" font-size="12" fill="#000" textLength="50" lengthAdjust="spacingAndGlyphs">Терминал</text>
<!-- status -->
<rect class="c" x="0" y="745" width="1304" height="23" fill="#f0f0f0"/>
<rect class="c" x="0" y="744" width="1304" height="2" fill="#b4b4b4"/>
<text x="2" y="762" font-size="12" fill="#000" textLength="177" lengthAdjust="spacingAndGlyphs">Для вызова справки нажмите F1</text>
<path class="c" d="M610.500 749v17M1038.500 749v17M1108.500 749v17M1175.500 749v17" stroke="#999"/>
<text x="616" y="762" font-size="12" fill="#000" textLength="71" lengthAdjust="spacingAndGlyphs">Abel XVIII vek</text>
<text x="1206" y="762" font-size="12" fill="#000" textLength="53" lengthAdjust="spacingAndGlyphs">1945/5 kb</text>
<path class="c" d="M1181 758v-6M1184 758v-6M1187 758v-6M1190 758v-6M1193 758v-6M1196 758v-6M1199 758v-6M1202 758v-6" stroke="#6a7a10" stroke-width="2"/>
<path class="c" d="M1181 764v-6M1184 764v-6M1187 764v-6M1190 764v-6M1193 764v-6M1196 764v-6M1199 764v-6M1202 764v-6" stroke="#104a60" stroke-width="2"/>

<!-- left panels -->
<rect x="0" y="71" width="62" height="533" fill="#f0f0f0"/>
<rect class="c" x="3" y="72" width="42" height="16" fill="#d4e2f0"/>
<text x="6" y="83" font-size="12" fill="#000" textLength="40" lengthAdjust="spacingAndGlyphs">Обзор р</text>
<text x="50" y="83" font-size="12" font-weight="bold">×</text>
<rect class="c" x="3" y="88" width="57" height="340" fill="#fff"/>
<g class="c">
<rect x="28" y="112" width="14" height="160" fill="#eef8ee"/>
<rect x="4" y="272" width="38" height="21" fill="#dcdcdc"/>
<rect x="4" y="293" width="38" height="20" fill="#dda0dd"/>
<rect x="4" y="313" width="38" height="20" fill="#98ee98"/>
<rect x="28" y="333" width="14" height="40" fill="#eef8ee"/>
<rect x="4" y="373" width="38" height="20" fill="#ff8c00"/>
<rect x="4" y="393" width="38" height="17" fill="#98ee98"/>
<rect x="4" y="410" width="38" height="9" fill="#ffc0cb"/>
<path d="M28 90V410M42 90V410" stroke="#dfe9df"/>
<path d="M4 111.500H42M4 131.500H42M4 151.500H42M4 171.500H42M4 191.500H42M4 211.500H42M4 231.500H42M4 251.500H42M4 271.500H42M4 352.500H42" stroke="#d8e4d8"/>
<rect x="43" y="90" width="16" height="330" fill="#f0f0f0"/><rect x="44" y="105" width="14" height="20" fill="#cdcdcd"/>
</g>
<path d="M47 100l4-4 4 4" fill="none" stroke="#555" stroke-width="2"/>
<text x="10" y="104" font-size="12">(</text>
<use href="#ad" x="13" y="121"/><use href="#ad" x="13" y="141"/><use href="#au" x="13" y="161"/><use href="#au" x="13" y="181"/><use href="#au" x="13" y="201"/><use href="#ad" x="13" y="221"/><use href="#ad" x="13" y="241"/><use href="#ad" x="13" y="261"/><use href="#au" x="13" y="283"/><use href="#au" x="13" y="303"/><use href="#au" x="13" y="323"/><use href="#au" x="13" y="342"/><use href="#au" x="13" y="362"/>
<use href="#ad" x="13" y="381"/><use href="#au" x="13" y="401"/>
<text x="48" y="438" font-size="12">ол</text>
<path class="c" d="M4.500 420V445" stroke="#888"/>
<rect class="c" x="3" y="451" width="12" height="13" fill="#d4e2f0"/>
<text x="4" y="462" font-size="12">Н</text><text x="50" y="461" font-size="12" font-weight="bold">×</text>
<rect class="c" x="4" y="465" width="56" height="155" fill="#fff"/>
<rect x="9" y="470" width="7" height="9" fill="#cfe0f4" stroke="#4a8ad0"/>
<g font-size="12"><text x="51" y="480">M</text><text x="52" y="498">С</text><text x="52" y="515">И</text><text x="52" y="533">С</text><text x="52" y="552">С</text><text x="52" y="612">е</text></g>
<path class="c" d="M5.500 598V616.500H15" fill="none" stroke="#000"/>
<path class="c" d="M60.500 465V620M3.500 465V620" stroke="#ccc"/>

<!-- drawing toolbar -->
<rect class="c" x="15" y="383" width="35" height="375" fill="#22262c"/>
<rect class="c" x="15" y="728" width="35" height="30" fill="#050506"/>
<path d="M34 391l10 10M44 391l-10 10" stroke="#cfcfcf" stroke-width=".9"/>
<rect class="c" x="19" y="408" width="26" height="26" fill="#3c96e8"/>
<path d="M27 411v16l4-4 3 6 3-1-3-6h5z" fill="#fff"/>
<g class="c" fill="#14171b" stroke="#3a3e44">
<rect x="19.500" y="441.500" width="25" height="25"/><rect x="19.500" y="468.500" width="25" height="25"/><rect x="19.500" y="496.500" width="25" height="25"/><rect x="19.500" y="524.500" width="25" height="25"/><rect x="19.500" y="552.500" width="25" height="25"/><rect x="19.500" y="580.500" width="25" height="25"/><rect x="19.500" y="608.500" width="25" height="25"/><rect x="19.500" y="636.500" width="25" height="25"/><rect x="19.500" y="673.500" width="25" height="25"/><rect x="19.500" y="701.500" width="25" height="25"/><rect x="19.500" y="738.500" width="25" height="16"/>
</g>
<rect class="c" x="15" y="667" width="35" height="1" fill="#4a4e54"/>
<path d="M24 462l2-7 10-10 6 6-10 10z" fill="#d8d8d8"/><path d="M27.500 456l9-9M30 458.500l9-9" stroke="#22262c" fill="none"/><path d="M24 462l1-3.500 2.500 2.500z" fill="#222"/>
<path d="M29 477l8-7 6 5-8 9h-6l-3-3z" fill="#e8e8e8"/><path d="M23 490h7" stroke="#e8e8e8" stroke-width="2"/>
<path d="M24 517l16-16" stroke="#dcdcdc" stroke-width="2"/>
<path d="M41 529l-13 13" stroke="#bbb" stroke-width="2.400"/><path d="M24 546l3-9 6 6z" fill="#cfcfcf"/>
<rect x="24.500" y="559.500" width="15" height="11" fill="none" stroke="#e0e0e0" stroke-width="1.400"/>
<circle cx="28" cy="588" r="4.500" fill="#d8d8d8"/><circle cx="38" cy="591" r="4.500" fill="#d8d8d8"/><circle cx="32" cy="597" r="5" fill="#e8e8e8"/>
<g font-size="6" font-weight="bold" fill="#111" text-anchor="middle"><text x="28" y="590">1</text><text x="38" y="593">2</text><text x="32" y="599">3</text></g>
<text x="32" y="628" font-size="20" fill="#e4e4e4" text-anchor="middle" font-family="Liberation Serif,serif">T</text>
<path d="M26 650l9-9 6 5-9 9h-5l-2-2z" fill="#e8e8e8"/><path d="M24 658h15" stroke="#e8e8e8"/>
<rect class="c" x="24" y="678" width="16" height="16" fill="#e8e8e8"/>
<path class="c" d="M24 678h4v4h-4zM32 678h4v4h-4zM28 682h4v4h-4zM36 682h4v4h-4zM24 686h4v4h-4zM32 686h4v4h-4zM28 690h4v4h-4zM36 690h4v4h-4z" fill="#a8a8a8"/>
<path class="c" d="M24 714h16" stroke="#e0e0e0" stroke-width="2"/>
<path d="M22 746l5-3.500v2h3v3h-3v2zM42 746l-5-3.500v2h-3v3h3v2z" fill="#d8d8d8"/>

<!-- banner -->
<rect class="c" x="54" y="0" width="238" height="62" fill="#fff"/>
<g class="c">
<rect x="62" y="3" width="21" height="27" fill="#1f3a78"/><rect x="84" y="3" width="19" height="27" fill="#bcc0bc"/><rect x="104" y="3" width="20" height="27" fill="#c4c6c0"/><rect x="125" y="3" width="21" height="27" fill="#6e7270"/>
<rect x="62" y="31" width="42" height="26" fill="#3a3a3a"/><rect x="104" y="31" width="42" height="26" fill="#c02020"/><rect x="128" y="34" width="14" height="15" fill="#6cc8e8"/><rect x="108" y="33" width="13" height="24" fill="#d0a888"/><rect x="106" y="46" width="20" height="11" fill="#e0e0e8"/>
<rect x="147" y="3" width="64" height="27" fill="#4a4a4a"/><rect x="147" y="30" width="64" height="28" fill="#2a2a2a"/><rect x="147" y="3" width="64" height="6" fill="#7a7a78"/>
<rect x="212" y="3" width="80" height="53" fill="#bcbcbc"/>
<path d="M218 10h55M218 14h60M220 18h50" stroke="#c82020" stroke-width="1.200" stroke-dasharray="3 1"/>
<path d="M218 24h58M218 29h62M218 34h52" stroke="#2030b0" stroke-width="1.200" stroke-dasharray="3 1"/>
<rect x="216" y="48" width="64" height="5" fill="#8a7a40"/>
<rect x="147" y="30" width="137" height="18" fill="#fff"/>
</g>
<text x="148" y="28" font-size="13" font-weight="bold" fill="#f0f0f0" textLength="58" lengthAdjust="spacingAndGlyphs">ForexClub</text>
<text x="64" y="44" font-size="8" font-weight="bold" fill="#e0e0e0" textLength="38" lengthAdjust="spacingAndGlyphs">ForexClub</text>
<text x="148" y="45" font-size="20" font-weight="bold" font-style="italic" fill="#4848e0" textLength="139" lengthAdjust="spacingAndGlyphs">www.Fxclub.by</text>
<g class="c">
<rect x="292" y="1" width="673" height="34" fill="#0a0404"/><rect x="292" y="35" width="20" height="22" fill="#1e0e06"/>
<rect x="293" y="18" width="157" height="17" fill="#1e0e06"/>
<rect x="295" y="24" width="40" height="11" fill="#4e2a12"/><rect x="340" y="26" width="50" height="9" fill="#5a3618"/><rect x="385" y="23" width="45" height="5" fill="#6a8c30"/><rect x="386" y="32" width="45" height="3" fill="#e85040"/><rect x="432" y="14" width="18" height="3" fill="#f4f4f4"/>
<rect x="450" y="22" width="110" height="13" fill="#201208"/><rect x="472" y="12" width="80" height="5" fill="#f4f4f4"/><rect x="470" y="23" width="30" height="9" fill="#a89078"/><rect x="530" y="21" width="28" height="8" fill="#e8a8e8"/><rect x="530" y="30" width="30" height="5" fill="#b87830"/>
<rect x="560" y="11" width="50" height="5" fill="#f4f4f4"/><rect x="567" y="24" width="14" height="6" fill="#f4f4f4"/><rect x="581" y="19" width="7" height="16" fill="#80e070"/><rect x="588" y="19" width="14" height="16" fill="#d84020"/><rect x="610" y="25" width="8" height="6" fill="#f4f4f4"/><rect x="617" y="23" width="7" height="6" fill="#e03010"/>
<rect x="625" y="12" width="60" height="4" fill="#3e2010"/><rect x="650" y="12" width="20" height="4" fill="#1a0a04"/><rect x="630" y="26" width="40" height="9" fill="#1e0e06"/><rect x="653" y="26" width="16" height="6" fill="#f4f4f4"/><rect x="685" y="25" width="12" height="6" fill="#f4f4f4"/>
<rect x="670" y="32" width="90" height="3" fill="#3878d8"/><rect x="697" y="16" width="28" height="2" fill="#9a6a20"/>
<rect x="696" y="21" width="8" height="14" fill="#c0a0c0"/><rect x="703" y="24" width="24" height="6" fill="#e8a8e8"/><rect x="720" y="31" width="45" height="4" fill="#f09820"/>
<rect x="755" y="25" width="55" height="10" fill="#e89c28"/><rect x="762" y="28" width="22" height="4" fill="#f4d080"/><rect x="790" y="9" width="40" height="9" fill="#1e1208"/><rect x="812" y="17" width="21" height="18" fill="#90e070"/><rect x="833" y="25" width="17" height="10" fill="#e8a820"/><rect x="850" y="22" width="25" height="13" fill="#f09820"/><rect x="850" y="24" width="16" height="3" fill="#3878d8"/><rect x="875" y="15" width="25" height="10" fill="#6a3a14"/><rect x="875" y="25" width="28" height="10" fill="#f4c050"/>
<rect x="900" y="6" width="20" height="19" fill="#120606"/><rect x="913" y="9" width="35" height="16" fill="#e8a8e8"/><rect x="900" y="25" width="63" height="10" fill="#d8962a"/><rect x="940" y="12" width="23" height="13" fill="#3e2010"/>
<rect x="310" y="35" width="655" height="27" fill="#fff"/>
<rect x="950" y="30" width="13" height="27" fill="#c8881c"/>
</g>
<text x="311" y="50" font-size="15" font-weight="bold" font-style="italic" fill="#3c3cdc" textLength="640" lengthAdjust="spacingAndGlyphs">WELCOM MY CHANNELS ВАДИМ СЕРГЕЕВИЧ ЛЕПЕХО YOUTUBE</text>
<g font-size="12" font-weight="bold" font-style="italic" fill="#111"><text x="313" y="60" textLength="143" lengthAdjust="spacingAndGlyphs">www.wildforexvadzimsl.by</text><text x="554" y="60" textLength="143" lengthAdjust="spacingAndGlyphs">www.wildforexvadzimsl.by</text><text x="795" y="60" textLength="143" lengthAdjust="spacingAndGlyphs">www.wildforexvadzimsl.by</text></g>
<!-- flag -->
<rect class="c" x="965" y="0" width="185" height="62" fill="#fff"/>
<rect class="c" x="965" y="1" width="36" height="28" fill="#f4e0e0"/>
<path d="M967 4h32M967 9h32M967 14h32M967 19h32M967 24h32M972 1v28M980 1v28M988 1v28M996 1v28" stroke="#d83030" stroke-dasharray="2 2"/>
<path d="M1002 0H1050L1097 6 1148 20V47L1143 56 1108 42 1056 48 1004 26Z" fill="#ee2024"/>
<path d="M1097 6L1120 10 1122 17 1112 17Z" fill="#b82028"/>
<path d="M1108 42C1118 40 1135 44 1148 47L1146 56C1130 52 1118 50 1106 56H1056V46C1075 48 1095 48 1108 42Z" fill="#0aa050"/>
<ellipse cx="1060" cy="30" rx="53" ry="18" fill="#8c7428"/>
<ellipse cx="1060" cy="30" rx="52" ry="17" fill="none" stroke="#1c1c14" stroke-width="2" stroke-dasharray="3 2"/>
<ellipse cx="1060" cy="28" rx="34" ry="12" fill="#e8dcc0"/>
<path d="M1056 35c14 8 30 8 46 0l-4 8c-14 5-30 5-42 0z" fill="#c02020"/><path d="M1056 39c14 6 28 6 40 2M1056 43c14 5 26 4 36 1" stroke="#2a2a10" fill="none" stroke-dasharray="3 1.500"/>
<rect class="c" x="962" y="30" width="94" height="32" fill="#fff"/>
<rect class="c" x="962" y="32" width="23" height="3" fill="#ee2024"/><rect x="962" y="42" width="19" height="5" rx="2.500" fill="#10a8ec"/><rect class="c" x="962" y="52" width="23" height="5" fill="#b07850"/>
<g font-style="italic" fill="#4848dc"><text x="986" y="38" font-size="12" textLength="69" lengthAdjust="spacingAndGlyphs">заказ/ордер</text><text x="984" y="48" font-size="9" textLength="69" lengthAdjust="spacingAndGlyphs">стык Bulls&amp;Bears</text><text x="985" y="58" font-size="12" textLength="70" lengthAdjust="spacingAndGlyphs">Line DeMark</text></g>
</svg>
</body></html>
